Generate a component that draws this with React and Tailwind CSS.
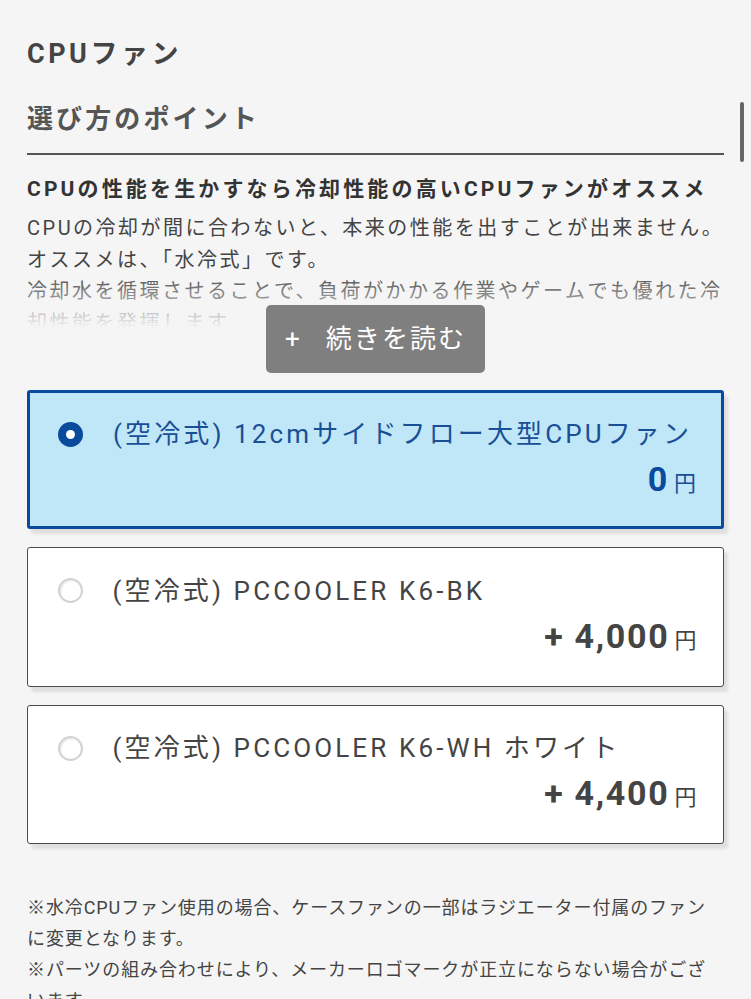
import React, { useState } from 'react';

const font = "font-['Roboto','Noto_Sans_CJK_JP',sans-serif]";

const options = [
  { id: 'side', label: '(空冷式) 12cmサイドフロー大型CPUファン', price: '0' },
  { id: 'k6bk', label: '(空冷式) PCCOOLER K6-BK', price: '+ 4,000' },
  { id: 'k6wh', label: '(空冷式) PCCOOLER K6-WH ホワイト', price: '+ 4,400' },
];

const bodyLines = [
  'CPUの冷却が間に合わないと、本来の性能を出すことが出来ません。',
  'オススメは、「水冷式」です。',
  '冷却水を循環させることで、負荷がかかる作業やゲームでも優れた冷',
  '却性能を発揮します。',
];

const notes = [
  '※水冷CPUファン使用の場合、ケースファンの一部はラジエーター付属のファン',
  'に変更となります。',
  '※パーツの組み合わせにより、メーカーロゴマークが正立にならない場合がござ',
  'います。',
];

// radio dot
const Radio = ({ checked }) =>
  checked ? (
    <span className="flex h-[25px] w-[25px] shrink-0 items-center justify-center rounded-full bg-[#0a4a9c]">
      <span className="h-[9px] w-[9px] rounded-full bg-white" />
    </span>
  ) : (
    <span className="h-[25px] w-[25px] shrink-0 rounded-full border-2 border-[#d2d2d2] bg-white shadow-[inset_1px_1px_2px_rgba(0,0,0,0.1)]" />
  );

const OptionCard = ({ item, checked, onSelect }) => (
  <button
    onClick={onSelect}
    className={
      'block w-full rounded-[3px] text-left shadow-[4px_5px_3px_rgba(0,0,0,0.09)] ' +
      (checked
        ? 'border-[3px] border-[#0a4a9c] bg-[#bfe7f8] pl-[28px] pr-[25px] pt-[24px] pb-[26px]'
        : 'border-[1.5px] border-[#4a4a4a] bg-white pl-[29.5px] pr-[26.5px] pt-[25.5px] pb-[29px]')
    }
  >
    <div className="flex items-center gap-[30px]">
      <Radio checked={checked} />
      <span
        className={
          'whitespace-nowrap text-[26px] leading-[34px] tracking-[0.12em] ' +
          (checked ? 'text-[#1a4f96]' : 'text-[#444]')
        }
      >
        {item.label}
      </span>
    </div>
    <div className="mt-[8px] flex items-baseline justify-end">
      <span
        className={
          'text-[34px] font-bold leading-[40px] tracking-[0.05em] ' +
          (checked ? 'text-[#0b4a9d]' : 'text-[#444]')
        }
      >
        {item.price}
      </span>
      <span className={'ml-[5px] text-[22px] ' + (checked ? 'text-[#1a4f96]' : 'text-[#444]')}>円</span>
    </div>
  </button>
);

export default function App() {
  const [selected, setSelected] = useState('side');

  return (
    <div className={`relative min-h-[999px] overflow-hidden bg-[#f5f5f5] px-[27px] ${font}`}>
      {/* scroll indicator */}
      <div className="absolute right-[7px] top-[102px] h-[60px] w-[4px] rounded-full bg-[#666]" />

      <h2 className="pt-[36px] text-[27px] font-bold leading-[36px] tracking-[0.13em] text-[#444]">CPUファン</h2>

      <div className="mt-[29px] border-b-2 border-[#555] pb-[16px]">
        <h3 className="text-[26px] font-bold leading-[36px] tracking-[0.12em] text-[#555]">選び方のポイント</h3>
      </div>

      <div className="relative mt-[19px]">
        <p className="whitespace-nowrap text-[21px] font-bold leading-[30px] tracking-[0.15em] text-[#333]">
          CPUの性能を生かすなら冷却性能の高いCPUファンがオススメ
        </p>
        <div className="mt-[9px] h-[126px] overflow-hidden">
          {bodyLines.map((l) => (
            <p key={l} className="whitespace-nowrap text-[20px] leading-[31.5px] tracking-[0.125em] text-[#444]">
              {l}
            </p>
          ))}
        </div>
        {/* fade out of the clipped text */}
        <div className="absolute inset-x-0 top-[98px] h-[56px] bg-gradient-to-b from-[#f5f5f5]/0 to-[#f5f5f5]" />
        <div className="absolute inset-x-0 top-[154px] h-[20px] bg-[#f5f5f5]" />
        <div className="absolute inset-x-0 top-[131px] flex justify-center">
          <button className="flex h-[68px] w-[219px] items-center justify-center gap-[24px] rounded-[5px] bg-[#7f7f7f] text-[26px] tracking-[0.08em] text-white">
            <span>+</span>
            <span>続きを読む</span>
          </button>
        </div>
      </div>

      <div className="mt-[51px] flex flex-col gap-[18px]">
        {options.map((o) => (
          <OptionCard key={o.id} item={o} checked={selected === o.id} onSelect={() => setSelected(o.id)} />
        ))}
      </div>

      <div className="mt-[48px]">
        {notes.map((n) => (
          <p key={n} className="whitespace-nowrap text-[18px] leading-[31px] tracking-[0.05em] text-[#444]">
            {n}
          </p>
        ))}
      </div>
    </div>
  );
}
